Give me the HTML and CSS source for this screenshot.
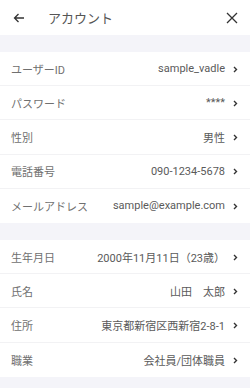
FILE: index.html
```html
<!DOCTYPE html>
<html lang="ja">
<head>
<meta charset="utf-8">
<link rel="stylesheet" href="styles.css">
</head>
<body>
<div class="app">
  <header class="header">
    <svg class="back" width="12" height="10" viewBox="0 0 12 10"><path d="M11 5H1.5M5.5 1L1.5 5l4 4" fill="none" stroke="#333" stroke-width="1.3"/></svg>
    <span class="title">アカウント</span>
    <svg class="close" width="12" height="12" viewBox="0 0 12 12"><path d="M1 1l10 10M11 1L1 11" fill="none" stroke="#333" stroke-width="1.3"/></svg>
  </header>
  <div class="gap"></div>
  <ul class="group">
    <li class="row"><span class="label">ユーザーID</span><span class="value">sample_vadle</span><svg class="chev" width="5" height="7" viewBox="0 0 5 7"><path d="M1 1l2.5 2.5L1 6" fill="none" stroke="#333" stroke-width="1.4"/></svg></li>
    <li class="row"><span class="label">パスワード</span><span class="value">****</span><svg class="chev" width="5" height="7" viewBox="0 0 5 7"><path d="M1 1l2.5 2.5L1 6" fill="none" stroke="#333" stroke-width="1.4"/></svg></li>
    <li class="row"><span class="label">性別</span><span class="value">男性</span><svg class="chev" width="5" height="7" viewBox="0 0 5 7"><path d="M1 1l2.5 2.5L1 6" fill="none" stroke="#333" stroke-width="1.4"/></svg></li>
    <li class="row"><span class="label">電話番号</span><span class="value">090-1234-5678</span><svg class="chev" width="5" height="7" viewBox="0 0 5 7"><path d="M1 1l2.5 2.5L1 6" fill="none" stroke="#333" stroke-width="1.4"/></svg></li>
    <li class="row"><span class="label">メールアドレス</span><span class="value">sample@example.com</span><svg class="chev" width="5" height="7" viewBox="0 0 5 7"><path d="M1 1l2.5 2.5L1 6" fill="none" stroke="#333" stroke-width="1.4"/></svg></li>
  </ul>
  <div class="gap"></div>
  <ul class="group">
    <li class="row"><span class="label">生年月日</span><span class="value">2000年11月11日（23歳）</span><svg class="chev" width="5" height="7" viewBox="0 0 5 7"><path d="M1 1l2.5 2.5L1 6" fill="none" stroke="#333" stroke-width="1.4"/></svg></li>
    <li class="row"><span class="label">氏名</span><span class="value">山田　太郎</span><svg class="chev" width="5" height="7" viewBox="0 0 5 7"><path d="M1 1l2.5 2.5L1 6" fill="none" stroke="#333" stroke-width="1.4"/></svg></li>
    <li class="row"><span class="label">住所</span><span class="value">東京都新宿区西新宿2-8-1</span><svg class="chev" width="5" height="7" viewBox="0 0 5 7"><path d="M1 1l2.5 2.5L1 6" fill="none" stroke="#333" stroke-width="1.4"/></svg></li>
    <li class="row"><span class="label">職業</span><span class="value">会社員/団体職員</span><svg class="chev" width="5" height="7" viewBox="0 0 5 7"><path d="M1 1l2.5 2.5L1 6" fill="none" stroke="#333" stroke-width="1.4"/></svg></li>
  </ul>
  <div class="gap tail"></div>
</div>
</body>
</html>
```
FILE: styles.css
```css
* { box-sizing: border-box; }
html, body { margin: 0; padding: 0; }
body {
  background: #f4f4f9;
  font-family: Roboto, "Noto Sans CJK JP", sans-serif;
  color: #555;
}
.app { width: 250px; height: 388px; overflow: hidden; }
.header {
  height: 35px;
  background: #fff;
  display: flex;
  align-items: center;
  padding: 0 12px 0 13px;
}
.back { flex: none; margin-top: 1px; }
.title {
  margin-left: 23px;
  font-size: 13px;
  color: #555;
  flex: 1;
}
.close { flex: none; }
.gap { height: 17px; background: #f4f4f9; }
.tail { height: 20px; }
.group { list-style: none; margin: 0; padding: 0; background: #fff; }
.row {
  height: 34.2px;
  display: flex;
  align-items: center;
  padding: 0 12px 0 11px;
  border-bottom: 1px solid #f2f2f4;
  font-size: 11px;
}
.row:last-child { border-bottom: none; }
.label { flex: 1; color: #707070; }
.value { color: #5a5a5a; margin-right: 8px; }
.chev { flex: none; margin-top: 1px; }
```
